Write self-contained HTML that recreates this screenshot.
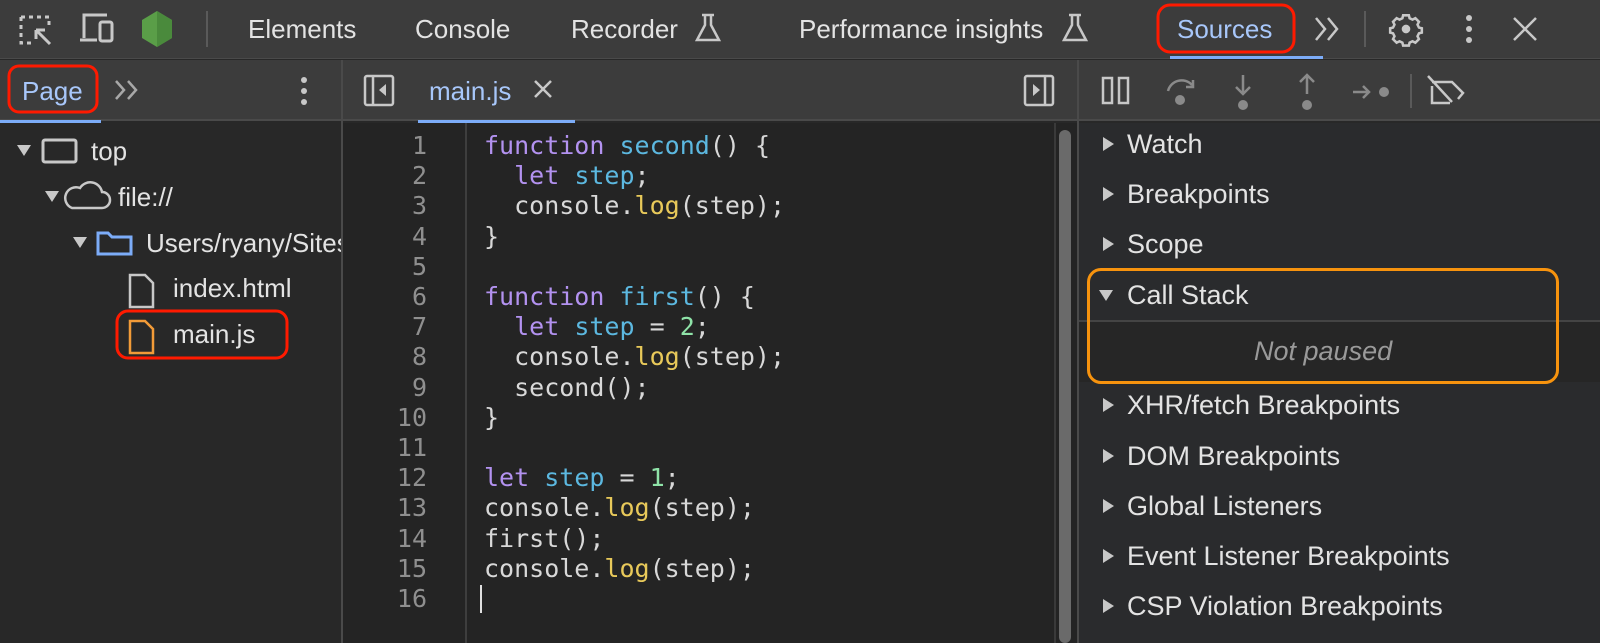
<!DOCTYPE html>
<html><head><meta charset="utf-8"><style>
*{margin:0;padding:0;box-sizing:border-box}
body{width:1600px;height:643px;overflow:hidden;background:#282828;font-family:"Liberation Sans",sans-serif;color:#e3e3e3;position:relative}
.a{position:absolute;white-space:nowrap}
.t{font-size:26px;line-height:30px}
.r{font-size:27px;line-height:30px}
.code{font-family:"DejaVu Sans Mono","Liberation Mono",monospace;font-size:25px;line-height:30.2px}
.k{color:#b392f0}.f{color:#5cb8e0}.l{color:#e8c95a}.n{color:#8fe3a8}.p{color:#d8d8d8}
.tri{width:0;height:0;border-left:7px solid transparent;border-right:7px solid transparent;border-top:11px solid #c8c8c8}
.trr{width:0;height:0;border-top:7px solid transparent;border-bottom:7px solid transparent;border-left:11px solid #c8c8c8}
</style></head><body>
<div class="a" style="left:0;top:0;width:1600px;height:59px;background:#3c3c3c;border-bottom:1px solid #4a4a4a"></div>
<svg class="a" style="left:0;top:0" width="1600" height="60">
 <g fill="none" stroke="#c8c8c8" stroke-width="3">
  <path d="M21 17h28v10M21 17v26h10" stroke-dasharray="4 4"/>
  <path d="M36 30l14 14M36 30h9M36 30v9"/>
  <path d="M84 38V15h23M80 40h17" /><rect x="100" y="22" width="12" height="19" rx="2"/>
 </g>
 <polygon points="157,11 172,20 172,38 157,47 142,38 142,20" fill="#5a9e48"/>
 <polygon points="157,11 172,20 172,38 157,47" fill="#4a8a3c"/>
 <line x1="207" y1="11" x2="207" y2="47" stroke="#5a5a5a" stroke-width="2"/>
 <g fill="none" stroke="#c8c8c8" stroke-width="2.5">
  <path d="M702 15h12M705 15v10l-8 15h22l-8-15V15"/>
  <path d="M1069 15h12M1072 15v10l-8 15h22l-8-15V15"/>
  <path d="M1316 18l9 11-9 11M1328 18l9 11-9 11"/>
  <path d="M1514 18l22 22M1536 18l-22 22"/>
 </g>
 <line x1="1365" y1="11" x2="1365" y2="47" stroke="#5a5a5a" stroke-width="2"/>
 <g fill="#c8c8c8"><circle cx="1469" cy="18" r="3"/><circle cx="1469" cy="29" r="3"/><circle cx="1469" cy="40" r="3"/></g>
 <g transform="translate(1406,29) scale(0.72) translate(-1406,-30)">
 <path d="M1402 11h8l1 4 4 2 4-2 5 5-2 4 2 4 4 1v6l-4 1-2 4 2 4-5 5-4-2-4 2-1 4h-8l-1-4-4-2-4 2-5-5 2-4-2-4-4-1v-6l4-1 2-4-2-4 5-5 4 2 4-2z" fill="none" stroke="#c8c8c8" stroke-width="3.5"/>
 <circle cx="1406" cy="30" r="6" fill="#c8c8c8"/>
 </g>
 <rect x="1170" y="56" width="153" height="3" fill="#7cacf8"/>
 <rect x="1158" y="5" width="136" height="47" rx="12" fill="none" stroke="#ff1a00" stroke-width="3"/>
</svg>
<div class="a t" style="left:248px;top:14px">Elements</div>
<div class="a t" style="left:415px;top:14px">Console</div>
<div class="a t" style="left:571px;top:14px">Recorder</div>
<div class="a t" style="left:799px;top:14px">Performance insights</div>
<div class="a t" style="left:1177px;top:14px;color:#a8c7fa">Sources</div>

<div class="a" style="left:0;top:60px;width:1600px;height:61px;background:#3c3c3c;border-bottom:2px solid #4a4a4a"></div>
<div class="a" style="left:341px;top:60px;width:2px;height:583px;background:#4a4a4a"></div>
<div class="a" style="left:1077px;top:60px;width:2px;height:583px;background:#4a4a4a"></div>
<div class="a t" style="left:22px;top:76px;color:#a8c7fa">Page</div>
<div class="a t" style="left:429px;top:76px;color:#a8c7fa">main.js</div>
<svg class="a" style="left:0;top:60px" width="1600" height="64">
 <rect x="9" y="6" width="88" height="46" rx="10" fill="none" stroke="#ff1a00" stroke-width="3"/>
 <rect x="0" y="60" width="101" height="3" fill="#7cacf8"/>
 <rect x="418" y="60" width="157" height="3" fill="#7cacf8"/>
 <g fill="none" stroke="#a8a8a8" stroke-width="2.5"><path d="M116 21l8 9-8 9M128 21l8 9-8 9"/></g>
 <g fill="#c8c8c8"><circle cx="304" cy="20" r="3"/><circle cx="304" cy="31" r="3"/><circle cx="304" cy="42" r="3"/></g>
 <g fill="none" stroke="#c8c8c8" stroke-width="2.5">
  <rect x="365" y="16" width="28" height="29" rx="2"/><line x1="373" y1="16" x2="373" y2="45"/>
  <path d="M535 21l16 16M551 21l-16 16"/>
  <rect x="1025" y="16" width="28" height="29" rx="2"/><line x1="1045" y1="16" x2="1045" y2="45"/>
  <rect x="1103" y="18" width="9" height="25"/><rect x="1119" y="18" width="9" height="25"/>
 </g>
 <path d="M386 24l-7 6 7 6z M1033 24l7 6-7 6z" fill="#c8c8c8"/>
 <g fill="none" stroke="#8a8a8a" stroke-width="2.5">
  <path d="M1168 31a14 14 0 0 1 24-6M1193 20v7h-7"/>
  <path d="M1243 15v19M1236 27l7 7 7-7"/>
  <path d="M1307 34V15M1300 22l7-7 7 7"/>
  <path d="M1353 32h16M1363 26l6 6-6 6"/>
 </g>
 <g fill="#8a8a8a"><circle cx="1180" cy="40" r="5"/><circle cx="1243" cy="45" r="5"/><circle cx="1307" cy="45" r="5"/><circle cx="1384" cy="32" r="5"/></g>
 <line x1="1411" y1="14" x2="1411" y2="48" stroke="#5a5a5a" stroke-width="2"/>
 <g fill="none" stroke="#c8c8c8" stroke-width="2.5"><path d="M1432 22h20l11 11-5 6M1450 43h-18V26M1428 16l24 26"/></g>
</svg>

<svg class="a" style="left:0;top:124px" width="341" height="240">
 <g fill="#c8c8c8"><path d="M17 21h14l-7 11z"/><path d="M45 67h14l-7 11z"/><path d="M73 113h14l-7 11z"/></g>
 <rect x="43" y="16" width="33" height="22" rx="2" fill="none" stroke="#c8c8c8" stroke-width="3"/>
 <path d="M72 84h30a8 8 0 0 0 0-16a12 12 0 0 0-22-4a10 10 0 0 0-8 20z" fill="none" stroke="#c8c8c8" stroke-width="2.5"/>
 <path d="M98 109h10l4 4h19v17h-33z" fill="none" stroke="#7cacf8" stroke-width="3"/>
 <path d="M130 151h15l8 8v24h-23z" fill="none" stroke="#c8c8c8" stroke-width="2.5"/>
 <path d="M130 197h15l8 8v24h-23z" fill="none" stroke="#f29b38" stroke-width="2.5"/>
 <rect x="117" y="187" width="170" height="47" rx="11" fill="none" stroke="#ff1a00" stroke-width="3"/>
</svg>
<div class="a t" style="left:91px;top:136px">top</div>
<div class="a t" style="left:118px;top:182px">file://</div>
<div class="a t" style="left:146px;top:228px;width:195px;overflow:hidden">Users/ryany/Sites</div>
<div class="a t" style="left:173px;top:273px">index.html</div>
<div class="a t" style="left:173px;top:319px">main.js</div>

<div class="a" style="left:343px;top:123px;width:734px;height:520px;background:#242424"></div>
<div class="a" style="left:465px;top:123px;width:2px;height:520px;background:#3e3e3e"></div>
<div class="a" style="left:1054px;top:123px;width:2px;height:520px;background:#3a3a3a"></div>
<div class="a" style="left:1059px;top:130px;width:12px;height:513px;background:#6a6a6a;border-radius:6px"></div>
<div class="a code" style="left:370px;top:131px;width:57px;text-align:right;color:#8f8f8f">1<br>2<br>3<br>4<br>5<br>6<br>7<br>8<br>9<br>10<br>11<br>12<br>13<br>14<br>15<br>16</div>
<div class="a code p" style="left:484px;top:131px;white-space:pre"><span class="k">function</span> <span class="f">second</span>() {
  <span class="k">let</span> <span class="f">step</span>;
  console.<span class="l">log</span>(step);
}

<span class="k">function</span> <span class="f">first</span>() {
  <span class="k">let</span> <span class="f">step</span> = <span class="n">2</span>;
  console.<span class="l">log</span>(step);
  second();
}

<span class="k">let</span> <span class="f">step</span> = <span class="n">1</span>;
console.<span class="l">log</span>(step);
first();
console.<span class="l">log</span>(step);
</div>
<div class="a" style="left:480px;top:585px;width:2px;height:28px;background:#e0e0e0"></div>

<div class="a" style="left:1079px;top:123px;width:521px;height:520px;background:#2a2b2d"></div>
<div class="a" style="left:1079px;top:320px;width:521px;height:2px;background:#444"></div>
<div class="a" style="left:1079px;top:322px;width:521px;height:60px;background:#262626"></div>
<div class="a" style="left:1087px;top:268px;width:472px;height:116px;border:3px solid #f7930e;border-radius:14px"></div>
<div class="a trr" style="left:1103px;top:137px"></div>
<div class="a trr" style="left:1103px;top:187px"></div>
<div class="a trr" style="left:1103px;top:237px"></div>
<div class="a tri" style="left:1099px;top:290px"></div>
<div class="a trr" style="left:1103px;top:398px"></div>
<div class="a trr" style="left:1103px;top:449px"></div>
<div class="a trr" style="left:1103px;top:499px"></div>
<div class="a trr" style="left:1103px;top:549px"></div>
<div class="a trr" style="left:1103px;top:599px"></div>
<div class="a r" style="left:1127px;top:129px">Watch</div>
<div class="a r" style="left:1127px;top:179px">Breakpoints</div>
<div class="a r" style="left:1127px;top:229px">Scope</div>
<div class="a r" style="left:1127px;top:280px">Call Stack</div>
<div class="a r" style="left:1254px;top:336px;font-style:italic;color:#9a9a9a">Not paused</div>
<div class="a r" style="left:1127px;top:390px">XHR/fetch Breakpoints</div>
<div class="a r" style="left:1127px;top:441px">DOM Breakpoints</div>
<div class="a r" style="left:1127px;top:491px">Global Listeners</div>
<div class="a r" style="left:1127px;top:541px">Event Listener Breakpoints</div>
<div class="a r" style="left:1127px;top:591px">CSP Violation Breakpoints</div>
</body></html>
